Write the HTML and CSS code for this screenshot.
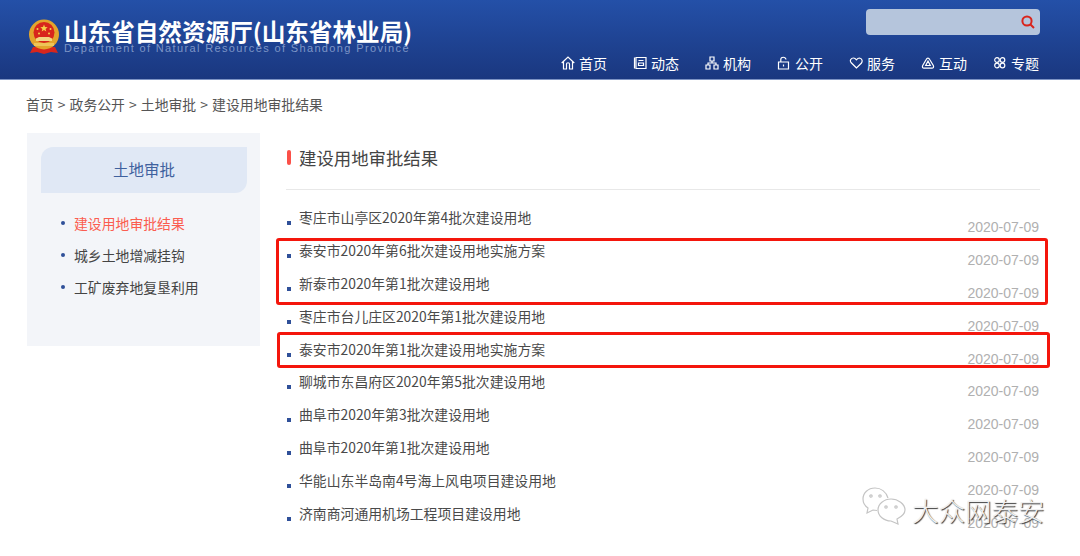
FILE: index.html
```html
<!DOCTYPE html>
<html lang="zh-CN">
<head>
  <meta charset="UTF-8">
  <meta name="viewport" content="width=device-width, initial-scale=1.0">
  <title>建设用地审批结果</title>
  <link rel="stylesheet" href="styles.css">
</head>
<body>
  <header class="site-header">
    <div class="brand">
      <svg class="emblem" viewBox="0 0 32 36">
        <path d="M5 28 L2 34 L9 33 L16 35 L23 33 L30 34 L27 28 Z" fill="#d8261c"/>
        <circle cx="16" cy="15.5" r="15" fill="#e3a52c"/>
        <circle cx="16" cy="13.5" r="10.5" fill="#d8261c"/>
        <path d="M16 5.5l1 2.6 2.7.1-2.1 1.7.7 2.6-2.3-1.5-2.3 1.5.7-2.6-2.1-1.7 2.7-.1z" fill="#f5d24a"/>
        <circle cx="9.5" cy="10" r="1" fill="#f5d24a"/>
        <circle cx="22.5" cy="10" r="1" fill="#f5d24a"/>
        <circle cx="11" cy="14.5" r="1" fill="#f5d24a"/>
        <circle cx="21" cy="14.5" r="1" fill="#f5d24a"/>
        <path d="M8 22h16v-2.500l-3-1.500h-10l-3 1.500z" fill="#f2d680"/>
        <path d="M6 27h20v-3h-20z" fill="#eec458"/>
      </svg>
      <div>
        <div class="brand-name">山东省自然资源厅(山东省林业局)</div>
        <div class="brand-en">Department of Natural Resources of Shandong Province</div>
      </div>
    </div>
    <div class="header-right">
      <div class="search">
        <svg viewBox="0 0 14 14" class="search-icon">
          <circle cx="6" cy="6" r="4.600"/>
          <path d="M9.500 9.500L13 13"/>
        </svg>
      </div>
      <nav class="nav">
        <a class="nav-item">
          <svg viewBox="0 0 14 14"><path d="M.7 7L7 1L13.300 7M2.500 5.600V13H5.500V8C5.500 6.300 8.500 6.300 8.500 8V13H11.500V5.600"/></svg>首页
        </a>
        <a class="nav-item">
          <svg viewBox="0 0 14 14"><path d="M3 1.500H13V12.500H3ZM1.500 1.500V12.500M5.500 4.500H10.500M5.500 7H10.500V9.500H5.500Z" /></svg>动态
        </a>
        <a class="nav-item">
          <svg viewBox="0 0 14 14"><path d="M5 1H9V5H5ZM1 9H5V13H1ZM9 9H13V13H9ZM7 5V7M3 9V7H11V9"/></svg>机构
        </a>
        <a class="nav-item">
          <svg viewBox="0 0 14 14"><path d="M1.500 6H11.500V13H1.500ZM3.800 6V3.500C3.800 .5 8.500 .5 9 3.500M6.500 8.500V10.500"/></svg>公开
        </a>
        <a class="nav-item">
          <svg viewBox="0 0 14 14"><path d="M7.500 12L2 6.500C.5 4.500 2 2 4.500 2C6 2 6.800 3 7.300 3.800C8 3 9 2 10.500 2C13 2.300 13.800 5 12.500 7Z"/></svg>服务
        </a>
        <a class="nav-item">
          <svg viewBox="0 0 14 14"><path d="M5.200 3.500C6 1.600 7.800 1.600 8.700 3.500L12.300 9.500C13 11 12.300 12.200 11 12.200H3C1.600 12.200 1 11 1.700 9.500ZM7 5L9.300 9.500H4.700Z"/></svg>互动
        </a>
        <a class="nav-item">
          <svg viewBox="0 0 14 14"><circle cx="4" cy="4" r="2.300"/><circle cx="9.500" cy="4" r="2.300"/><circle cx="4" cy="9.500" r="2.300"/><circle cx="9.500" cy="9.500" r="2.300"/></svg>专题
        </a>
      </nav>
    </div>
  </header>

  <div class="crumb">首页 &gt; 政务公开 &gt; 土地审批 &gt; 建设用地审批结果</div>

  <div class="content">
    <aside class="sidebar">
      <div class="side-title">土地审批</div>
      <ul class="side-list">
        <li class="active">建设用地审批结果</li>
        <li>城乡土地增减挂钩</li>
        <li>工矿废弃地复垦利用</li>
      </ul>
    </aside>
    <main class="main">
      <h2 class="main-title">建设用地审批结果</h2>
      <ul class="news">
        <li><span class="news-name">枣庄市山亭区2020年第4批次建设用地</span><span class="news-date">2020-07-09</span></li>
        <li><span class="news-name">泰安市2020年第6批次建设用地实施方案</span><span class="news-date">2020-07-09</span></li>
        <li><span class="news-name">新泰市2020年第1批次建设用地</span><span class="news-date">2020-07-09</span></li>
        <li><span class="news-name">枣庄市台儿庄区2020年第1批次建设用地</span><span class="news-date">2020-07-09</span></li>
        <li><span class="news-name">泰安市2020年第1批次建设用地实施方案</span><span class="news-date">2020-07-09</span></li>
        <li><span class="news-name">聊城市东昌府区2020年第5批次建设用地</span><span class="news-date">2020-07-09</span></li>
        <li><span class="news-name">曲阜市2020年第3批次建设用地</span><span class="news-date">2020-07-09</span></li>
        <li><span class="news-name">曲阜市2020年第1批次建设用地</span><span class="news-date">2020-07-09</span></li>
        <li><span class="news-name">华能山东半岛南4号海上风电项目建设用地</span><span class="news-date">2020-07-09</span></li>
        <li><span class="news-name">济南商河通用机场工程项目建设用地</span><span class="news-date">2020-07-09</span></li>
      </ul>
    </main>
  </div>

  <!-- red boxes drawn over the screenshot -->
  <div class="mark mark-one"></div>
  <div class="mark mark-two"></div>

  <div class="watermark">
    <svg viewBox="0 0 44 38" class="wechat">
      <path d="M26 11C24 5 19 1 13 1C6 1 1 6 1 12C1 16 3 19 6 21L5 26L11 23L15 23.500"/>
      <path d="M29 12C22 12 16 17 16 23C16 29 22 34 29 34L36 37L35 32C39 30 43 27 43 23C43 17 36 12 29 12Z"/>
      <circle cx="9" cy="9" r="1.200"/><circle cx="18" cy="9" r="1.200"/>
      <circle cx="24" cy="20" r="1.200"/><circle cx="34" cy="20" r="1.200"/>
    </svg>
    <span class="watermark-text">大众网泰安</span>
  </div>
</body>
</html>
```

FILE: styles.css
```css
* {
  box-sizing: border-box;
}
html, body {
  height: 556px;
  overflow: hidden;
}
body {
  margin: 0;
  font-family: "Noto Sans CJK SC", "Liberation Sans", sans-serif;
  font-size: 13.850px;
  color: #444;
  background: #fff;
  position: relative;
}
ul {
  list-style: none;
  margin: 0;
  padding: 0;
}

.site-header {
  height: 80px;
  background: linear-gradient(#2450a8, #1a377f);
  border-bottom: 1px solid #7d93c4;
  display: flex;
  justify-content: space-between;
  padding: 0 40px 0 28px;
}
.brand {
  display: flex;
  align-items: flex-start;
  gap: 4px;
  padding-top: 19px;
}
.emblem {
  width: 32px;
  height: 36px;
}
.brand-name {
  color: #fff;
  font-size: 23.600px;
  font-weight: 700;
  line-height: 22px;
  margin-top: 1px;
}
.brand-en {
  color: #7d95c6;
  font-family: "Liberation Sans", sans-serif;
  font-size: 11px;
  letter-spacing: 1.360px;
  line-height: 12px;
  white-space: nowrap;
}

.header-right {
  display: flex;
  flex-direction: column;
  align-items: flex-end;
  padding-top: 9px;
}
.search {
  width: 174px;
  height: 26px;
  background: #b5c5dc;
  border-radius: 4px;
  display: flex;
  justify-content: flex-end;
  align-items: center;
  padding-right: 5px;
}
.search-icon {
  width: 14px;
  height: 14px;
  fill: none;
  stroke: #d9251c;
  stroke-width: 2;
}
.nav {
  display: flex;
  gap: 26px;
  margin-top: 18px;
  margin-right: 1px;
}
.nav-item {
  display: flex;
  align-items: center;
  gap: 4px;
  color: #fff;
  font-size: 14px;
  line-height: 20px;
}
.nav-item svg {
  width: 14px;
  height: 14px;
  fill: none;
  stroke: #fff;
  stroke-width: 1.200;
}

.crumb {
  padding: 13px 0 0 26px;
  line-height: 22px;
  color: #555;
  word-spacing: 1px;
}

.content {
  display: flex;
  padding: 18px 40px 0 27px;
  gap: 26px;
}
.sidebar {
  width: 233px;
  height: 213px;
  flex-shrink: 0;
  background: #f3f5f9;
  padding: 14px;
}
.side-title {
  width: 206px;
  height: 46px;
  background: #e0e8f5;
  border-radius: 12px 0 12px 0;
  color: #3f619e;
  font-size: 15.500px;
  line-height: 44px;
  text-align: center;
}
.side-list {
  padding: 14px 0 0 33px;
}
.side-list li {
  height: 32px;
  line-height: 32px;
  color: #444;
  position: relative;
}
.side-list li::before {
  content: "";
  position: absolute;
  left: -13px;
  top: 14px;
  width: 4px;
  height: 4px;
  border-radius: 50%;
  background: #2f5099;
}
.side-list .active {
  color: #fb5d50;
}

.main {
  flex: 1;
}
.main-title {
  margin: 0;
  height: 57px;
  border-bottom: 1px solid #e8e8e8;
  padding: 13px 0 0 13px;
  font-size: 17.400px;
  font-weight: 400;
  line-height: 24px;
  color: #444;
  position: relative;
}
.main-title::before {
  content: "";
  position: absolute;
  left: 1px;
  top: 17px;
  width: 4px;
  height: 15px;
  border-radius: 2px;
  background: #fb5048;
}
.news {
  padding-top: 11px;
}
.news li {
  height: 32.900px;
  display: flex;
  justify-content: space-between;
  padding-left: 13px;
  position: relative;
}
.news li::before {
  content: "";
  position: absolute;
  left: 1px;
  top: 20px;
  width: 4px;
  height: 4px;
  background: #2f5099;
}
.news-name {
  line-height: 33px;
  color: #4a4a4a;
}
.news-date {
  padding-top: 18px;
  padding-right: 1px;
  line-height: 16px;
  font-family: "Liberation Sans", sans-serif;
  font-size: 14px;
  color: #b0b0b0;
  white-space: nowrap;
}

.mark {
  position: absolute;
  border: 3px solid #f4160c;
  border-radius: 3px;
}
.mark-one {
  left: 276px;
  top: 238px;
  width: 772px;
  height: 67px;
}
.mark-two {
  left: 277px;
  top: 332px;
  width: 773px;
  height: 36px;
}

.watermark {
  position: absolute;
  left: 862px;
  top: 487px;
  display: flex;
  align-items: flex-start;
  gap: 6px;
}
.wechat {
  width: 44px;
  height: 38px;
  fill: none;
  stroke: #c4c4c4;
  stroke-width: 1.200;
}
.watermark-text {
  font-size: 26.500px;
  line-height: 46px;
  font-weight: 300;
  color: #f0f0f0;
  text-shadow: 1px 1px 1px #333;
  white-space: nowrap;
}
```
